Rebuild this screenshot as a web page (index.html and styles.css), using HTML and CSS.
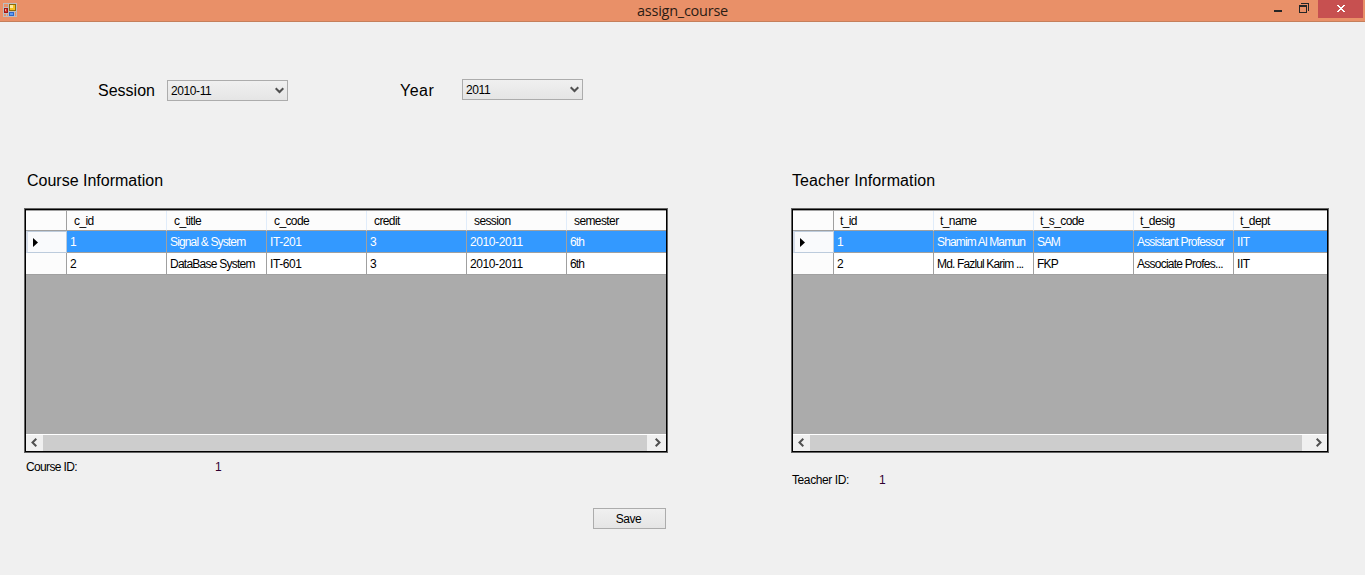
FILE: index.html
```html
<!DOCTYPE html>
<html lang="en">
<head>
<meta charset="utf-8">
<title>assign_course</title>
<link rel="stylesheet" href="styles.css">
</head>
<body>
<header class="titlebar">
  <svg class="app-icon" width="14" height="14" viewBox="0 0 14 14" shape-rendering="crispEdges">
    <path fill="#bdbdc0" d="M0 0h14v14H0z"/>
    <path fill="#e99068" d="M1 1h4v3H1zM1 11h2v2H1zM4 11h1v2H4zM12 9h1v4h-1z"/>
    <path fill="#8a6a0c" d="M6 1h7v7H6z"/><path fill="#f5bf25" d="M7 2h5v5H7z"/><path fill="#ffea9c" d="M7 2h3v3H7z"/>
    <path fill="#9d1714" d="M1 5h4v5H1z"/><path fill="#d9362c" d="M2 6h2v3H2z"/><path fill="#f4a49a" d="M2 6h1v2H2z"/>
    <path fill="#2c65c8" d="M6 9h5v4H6z"/><path fill="#5e9bf0" d="M7 10h3v2H7z"/>
  </svg>
  <h1 class="title">assign_course</h1>
  <div class="controls">
    <svg class="minimize" width="8" height="3" shape-rendering="crispEdges"><path fill="#262626" d="M0 0h8v2H0z"/></svg>
    <svg class="restore" width="10" height="10" shape-rendering="crispEdges"><path fill="#262626" fill-rule="evenodd" d="M0 2h8v8H0zM1 4v5h6V4zM2 0h8v8H9V1H2z"/></svg>
    <div class="close"><svg width="8" height="7" shape-rendering="crispEdges"><path fill="#fff" d="M0 0h2v1h1v1h2V1h1V0h2v1H7v1H6v1H5v1h1v1h1v1h1v1H6V6H5V5H3v1H2v1H0V6h1V5h1V4h1V3H2V2H1V1H0z"/></svg></div>
  </div>
</header>
<main class="form">
  <div class="filters">
    <label class="big session-label">Session</label>
    <div class="combo session"><span class="wide">2010-11</span><svg width="9" height="7"><path d="M.7 1.2 4.5 5 8.3 1.2" fill="none" stroke="#505050" stroke-width="2"/></svg></div>
    <label class="big year-label">Year</label>
    <div class="combo year"><span class="wide">2011</span><svg width="9" height="7"><path d="M.7 1.2 4.5 5 8.3 1.2" fill="none" stroke="#505050" stroke-width="2"/></svg></div>
  </div>
  <div class="panels">
    <section class="course">
      <h2 class="big">Course Information</h2>
      <div class="grid">
        <div class="view">
          <div class="row head"><i></i><b>c_id</b><b>c_title</b><b>c_code</b><b>credit</b><b>session</b><b>semester</b></div>
          <div class="row selected"><i><svg width="5" height="9"><path d="M0 0 5 4.5 0 9z"/></svg></i><span>1</span><span>Signal &amp; System</span><span class="wide">IT-201</span><span>3</span><span class="wide">2010-2011</span><span>6th</span></div>
          <div class="row"><i></i><span>2</span><span class="title-cell">DataBase System</span><span class="wide">IT-601</span><span>3</span><span class="wide">2010-2011</span><span>6th</span></div>
        </div>
        <div class="scroll"><div class="arrow"><svg width="8" height="9"><path d="M6.3.8 2.5 4.5l3.8 3.7" fill="none" stroke="#505050" stroke-width="2"/></svg></div><div class="thumb"></div><div class="arrow right"><svg width="8" height="9"><path d="M1.7.8 5.5 4.5 1.7 8.2" fill="none" stroke="#505050" stroke-width="2"/></svg></div></div>
      </div>
      <div class="id-line"><span class="id-name">Course ID:</span><span class="purple">1</span></div>
      <button class="save">Save</button>
    </section>
    <section class="teacher">
      <h2 class="big">Teacher Information</h2>
      <div class="grid">
        <div class="view">
          <div class="row head"><i></i><b>t_id</b><b>t_name</b><b>t_s_code</b><b>t_desig</b><b>t_dept</b></div>
          <div class="row selected"><i><svg width="5" height="9"><path d="M0 0 5 4.5 0 9z"/></svg></i><span>1</span><span>Shamim Al Mamun</span><span class="code">SAM</span><span>Assistant Professor</span><span class="wide">IIT</span></div>
          <div class="row"><i></i><span>2</span><span>Md. Fazlul Karim ...</span><span>FKP</span><span class="title-cell">Associate Profes...</span><span class="wide">IIT</span></div>
        </div>
        <div class="scroll"><div class="arrow"><svg width="8" height="9"><path d="M6.3.8 2.5 4.5l3.8 3.7" fill="none" stroke="#505050" stroke-width="2"/></svg></div><div class="thumb"></div><div class="arrow right"><svg width="8" height="9"><path d="M1.7.8 5.5 4.5 1.7 8.2" fill="none" stroke="#505050" stroke-width="2"/></svg></div></div>
      </div>
      <div class="id-line"><span class="id-name">Teacher ID:</span><span class="purple">1</span></div>
    </section>
  </div>
</main>
</body>
</html>
```
FILE: styles.css
```css
* { box-sizing: border-box; }
body { margin: 0; height: 575px; overflow: hidden; background: #f0f0f0; color: #000; font: 12px/14px "Liberation Sans", Arial, sans-serif; letter-spacing: -0.65px; }
svg { display: block; flex: none; }
.titlebar { display: grid; grid-template-columns: 180px 1fr 180px; height: 22px; background: #e99068; border-bottom: 1px solid #c57f5b; }
.app-icon { margin: 3px 0 0 3px; }
.title { margin: 0; text-align: center; font: 14.5px/21px "Open Sans", sans-serif; letter-spacing: -0.25px; color: #2b1c14; }
.controls { display: flex; justify-content: flex-end; padding-right: 2px; }
.minimize { margin: 10px 17px 0 0; }
.restore { margin: 3px 9px 0 0; }
.close { display: flex; justify-content: center; width: 45px; height: 18px; padding-top: 5px; background: #c75050; }
.big { margin: 0; font-size: 16px; line-height: 18px; font-weight: normal; letter-spacing: 0; }
.filters { display: flex; height: 149px; padding: 57px 0 0 98px; }
.filters .big { padding-top: 3px; }
.session-label { width: 69px; }
.year-label { width: 62px; letter-spacing: 0.5px; }
.combo { display: flex; align-items: center; justify-content: space-between; width: 121px; height: 21px; padding: 0 3px; border: 1px solid #acacac; background: linear-gradient(#f0f0f0, #e5e5e5); }
.session { margin: 1px 112px 0 0; }
.wide { letter-spacing: -0.4px; }
.panels { display: flex; padding-left: 24px; }
.course { width: 644px; margin-right: 123px; }
.teacher { width: 538px; }
.panels .big { height: 37px; padding: 1px 0 0 3px; }
.teacher .big { padding-left: 1px; letter-spacing: 0.1px; }
.grid { height: 245px; padding: 1px; border: 1px solid #646464; outline: 1px solid #000; outline-offset: -2px; display: flex; flex-direction: column; background: #ababab; }
.view { flex: 1; overflow: hidden; }
.row { display: flex; width: 700px; height: 22px; background: #fff; letter-spacing: -0.85px; }
.row > * { flex: none; width: 100px; height: 22px; padding: 4px 0 0 3px; border-right: 1px solid #a0a0a0; border-bottom: 1px solid #a0a0a0; font-weight: normal; white-space: nowrap; overflow: hidden; }
.row > i { width: 41px; background: #fcfcfc; }
.row > .code { letter-spacing: -1.1px; }
.row > .title-cell { letter-spacing: -0.75px; }
.head { height: 21px; background: #fcfcfc; border-top: 1px solid #a0a0a0; letter-spacing: -0.6px; }
.head > * { height: 20px; padding: 3px 0 0 7px; border-right-color: #e0ecfa; }
.teacher .head > * { padding-left: 6px; }
.head > i { border-right-color: #a0a0a0; }
.selected { background: #39f; color: #fff; }
.selected > i { padding: 6px 0 0 5px; border: 1px solid #bccbdc; border-left: 2px solid #d5dce8; background: #f9fafc; }
.scroll { display: flex; height: 17px; border-top: 1px solid #fff; background: #f0f0f0; }
.arrow { width: 17px; display: flex; align-items: center; padding: 0 0 2px 4px; }
.thumb { flex: 1; background: #cdcdcd; }
.right { width: 19px; padding-left: 7px; }
.teacher .right { width: 25px; padding-left: 13px; }
.id-line { display: flex; padding: 7px 0 0 2px; }
.teacher .id-line { padding: 20px 0 0 1px; }
.id-name { width: 189px; }
.teacher .id-name { width: 87px; letter-spacing: -0.4px; }
.purple { color: #300030; }
.save { display: block; width: 73px; height: 21px; margin: 34px 0 0 569px; padding: 0 2px 0 0; border: 1px solid #acacac; background: linear-gradient(#f0f0f0, #e5e5e5); font: inherit; letter-spacing: -0.5px; color: #000; }
```
